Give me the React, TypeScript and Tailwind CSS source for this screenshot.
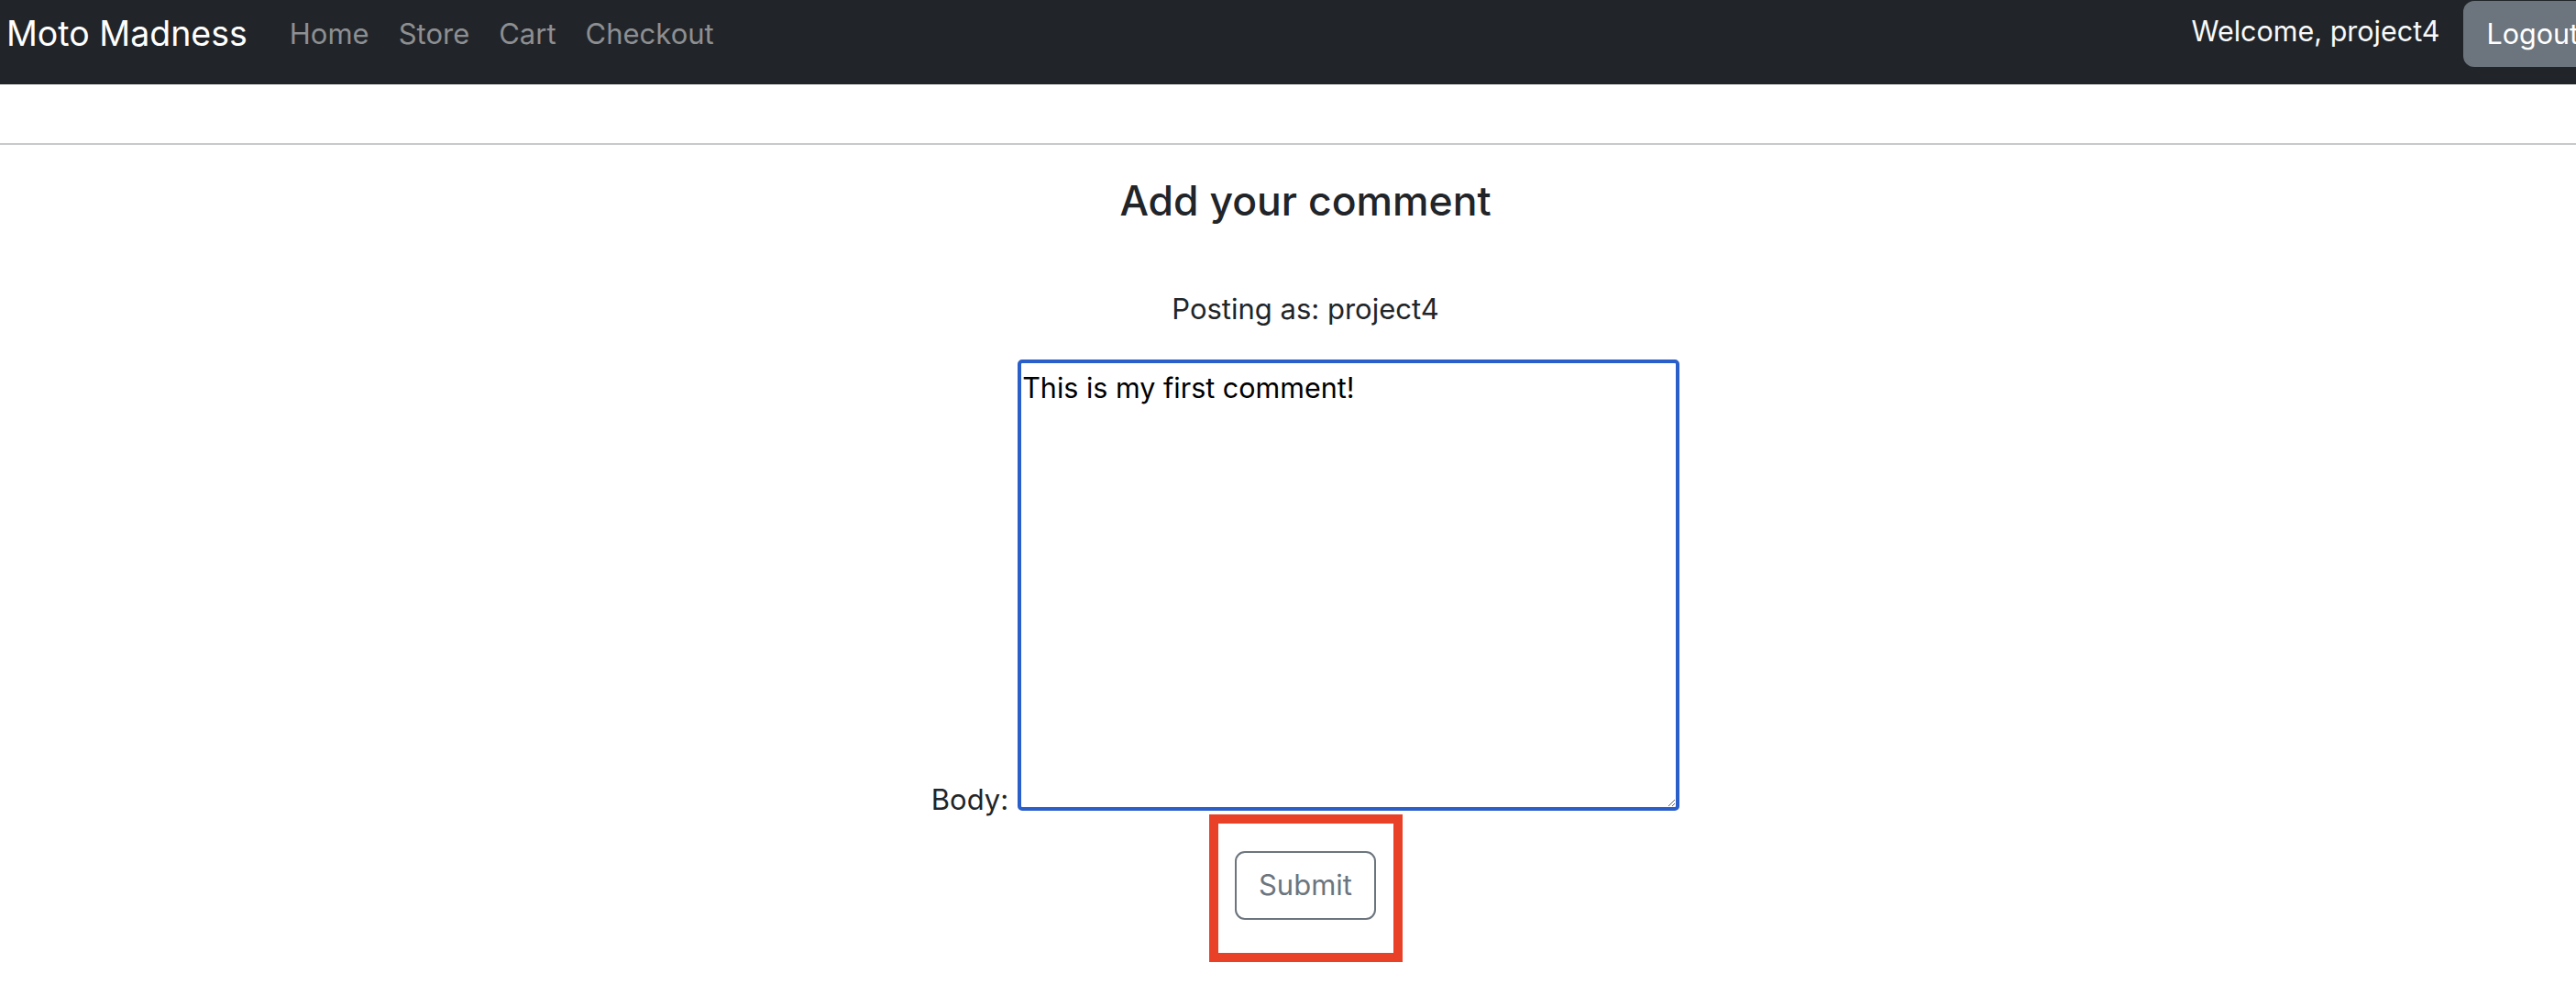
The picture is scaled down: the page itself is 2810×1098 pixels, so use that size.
import { useState } from "react";

const navLinks = ["Home", "Store", "Cart", "Checkout"];

export default function App() {
  const [body, setBody] = useState("This is my first comment!");

  return (
    <div className="w-[2810px] h-[1098px] overflow-hidden bg-white font-['Inter',sans-serif]">
      <div className="w-[2848px]">
        {/* Navbar */}
        <nav className="flex items-start h-[92px] bg-[#212529] pl-[7px] pr-[10px]">
          <a className="text-[37.5px] leading-[73px] text-white">Moto Madness</a>
          <ul className="flex gap-[32px] ml-[46px] text-[31px] leading-[73.5px] text-[#8d8f92]">
            {navLinks.map((l) => (
              <li key={l}>{l}</li>
            ))}
          </ul>
          <div className="ml-auto flex items-start gap-[26px]">
            <span className="text-[30.5px] leading-[68px] text-[#f8f9fa]">Welcome, project4</span>
            <button className="mt-px h-[72px] px-[25px] rounded-[12px] bg-[#6c757d] text-white text-[30.5px] leading-[72px]">
              Logout
            </button>
          </div>
        </nav>

        <hr className="mt-[64px] h-[2px] border-0 bg-[#c8c9ca]" />

        {/* Comment form */}
        <div className="flex flex-col items-center text-[#212529]">
          <h4 className="mt-[35px] text-[44.5px] leading-[53px] font-medium">Add your comment</h4>
          <p className="mt-[72px] text-[31px] leading-[37px]">Posting as: project4</p>

          <div className="mt-[37px] flex items-end gap-[10px]">
            <label className="text-[31px] leading-[24.5px] text-[#212529]">Body:</label>
            <textarea
              value={body}
              onChange={(e) => setBody(e.target.value)}
              className="w-[722px] h-[492px] border-[4px] border-[#2a5ec8] rounded-[5px] pt-[8px] px-[1px] text-[30.5px] leading-[37px] text-black outline-none font-['Inter',sans-serif]"
            />
          </div>

          <div className="relative mt-[44px]">
            <button className="w-[154px] h-[75px] border-2 border-[#6c757d] rounded-[11px] text-[31px] text-[#6c757d]">
              Submit
            </button>
            {/* annotation frame */}
            <div className="absolute -left-[28px] -right-[29px] -top-[40px] -bottom-[46px] border-[10px] border-[#e84127] pointer-events-none" />
          </div>
        </div>
      </div>
    </div>
  );
}
